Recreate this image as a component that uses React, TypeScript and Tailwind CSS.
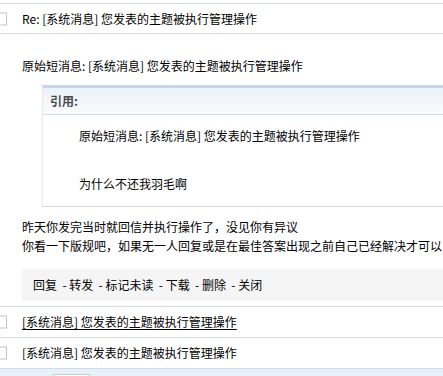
const font = { fontFamily: '"SimSun", "Noto Sans CJK SC", sans-serif' };

const CheckBox = () => (
    <span className="absolute left-[-5px] top-1/2 -translate-y-1/2 w-[12px] h-[13px] border border-[#c4c4c4] bg-white" />
);

const MsgRow = ({ text, underline }: { text: string; underline?: boolean }) => (
    <div className="relative flex items-center h-[31px] border-b border-[#d5dde4] pl-[22px] whitespace-nowrap">
        <CheckBox />
        <span className={underline ? 'underline underline-offset-2' : ''}>{text}</span>
    </div>
);

export default function App() {
    return (
        <div
            className="w-[443px] h-[376px] overflow-hidden bg-white text-[12px] text-black"
            style={font}
        >
            <div className="pt-[3px]">
                <div className="relative flex items-center h-[31px] border-t border-b border-[#d5dde4] pl-[22px] whitespace-nowrap">
                    <CheckBox />
                    <span>Re: [系统消息] 您发表的主题被执行管理操作</span>
                </div>

                <div className="pl-[22px] pt-[22px] whitespace-nowrap">
                    <p className="leading-[20px]">原始短消息: [系统消息] 您发表的主题被执行管理操作</p>

                    <div className="ml-[20px] mt-[9px] w-[480px] border-t-[3px] border-t-[#c8d7e7] border-l border-l-[#e2e8ee] border-b border-b-[#d5dbe0]">
                        <div className="h-[27px] flex items-center pl-[7px] bg-gradient-to-b from-[#ecf2fa] to-[#fafcfe] border-b border-[#cfd9e1]">
                            <span className="font-bold text-[#4a4a4a]">引用:</span>
                        </div>
                        <div className="pl-[36px] pt-[9px] pb-[10px] leading-[24px]">
                            <p>原始短消息: [系统消息] 您发表的主题被执行管理操作</p>
                            <p>&nbsp;</p>
                            <p>为什么不还我羽毛啊</p>
                        </div>
                    </div>

                    <div className="mt-[10px] leading-[19px]">
                        <p>昨天你发完当时就回信并执行操作了，没见你有异议</p>
                        <p>你看一下版规吧，如果无一人回复或是在最佳答案出现之前自己已经解决才可以</p>
                    </div>

                    <div className="mt-[14px] h-[32px] flex items-center pl-[11px] bg-[#f5f5f5]">
                        回复&nbsp; - 转发&nbsp; - 标记未读&nbsp; - 下载&nbsp; - 删除&nbsp; - 关闭
                    </div>
                </div>

                <div className="mt-[5px] border-t border-[#d5dde4]">
                    <MsgRow text="[系统消息] 您发表的主题被执行管理操作" underline />
                    <MsgRow text="[系统消息] 您发表的主题被执行管理操作" />
                </div>

                <div className="h-[20px] bg-[#e8f1fb] pl-[53px] pt-[5px]">
                    <div className="w-[37px] h-[12px] bg-white border border-[#c4ccd4]" />
                </div>
            </div>
        </div>
    );
}
